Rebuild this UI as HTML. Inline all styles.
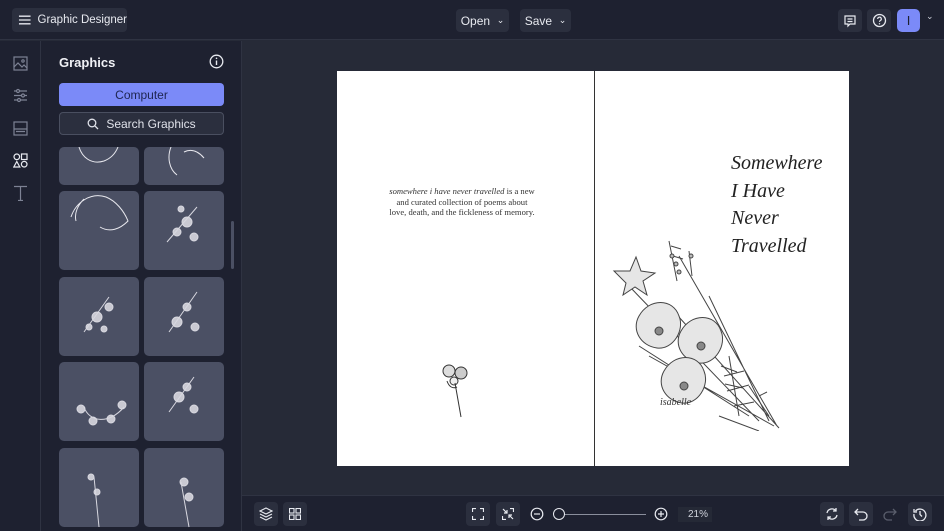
<!DOCTYPE html>
<html><head><meta charset="utf-8"><style>
*{box-sizing:border-box;margin:0;padding:0}
body{width:944px;height:531px;overflow:hidden;background:#262a37;font-family:"Liberation Sans",sans-serif;color:#e6e8ef;position:relative}
.top{position:absolute;left:0;top:0;width:944px;height:40px;background:#1e2130;border-bottom:1px solid #2f3342}
.btn{position:absolute;background:#2b2f3e;border-radius:4px;font-size:12px;color:#e8eaf0;display:flex;align-items:center;justify-content:center;white-space:nowrap}
.rail{position:absolute;left:0;top:41px;width:41px;height:490px;background:#1e2130;border-right:1px solid #2f3342}
.panel{position:absolute;left:41px;top:41px;width:201px;height:490px;background:#1e2130;border-right:1px solid #2f3342;overflow:hidden}
.tile{position:absolute;width:80px;height:79px;background:#4b5064;border-radius:5px}
.page{position:absolute;left:337px;top:71px;width:512px;height:395px;background:#fff}
.bot{position:absolute;left:242px;top:495px;width:702px;height:36px;background:#1e2130;border-top:1px solid #2f3342}
.ib{position:absolute;width:24px;height:24px;background:#2b2f3e;border-radius:4px;top:6px}
svg{position:absolute}
</style></head><body>
<div class="top">
 <div class="btn" style="left:12px;top:8px;width:115px;height:24px;justify-content:flex-start;padding-left:6px;font-size:11.5px">
  <svg style="position:static" width="14" height="12" viewBox="0 0 14 12"><path d="M1 2h12M1 6h12M1 10h12" stroke="#e8eaf0" stroke-width="1.4"/></svg>
  <span style="margin-left:6px">Graphic Designer</span></div>
 <div class="btn" style="left:456px;top:9px;width:53px;height:23px">Open&nbsp;&nbsp;<span style="font-size:9px">⌄</span></div>
 <div class="btn" style="left:520px;top:9px;width:51px;height:23px">Save&nbsp;&nbsp;<span style="font-size:9px">⌄</span></div>
 <div class="btn" style="left:838px;top:9px;width:24px;height:23px"><svg style="position:static" width="14" height="14" viewBox="0 0 14 14"><path d="M2 2h10v8H7l-2 2v-2H2z M4.5 5h5M4.5 7.5h5" fill="none" stroke="#e8eaf0" stroke-width="1.2"/></svg></div>
 <div class="btn" style="left:867px;top:9px;width:24px;height:23px"><svg style="position:static" width="15" height="15" viewBox="0 0 15 15"><circle cx="7.5" cy="7.5" r="6" fill="none" stroke="#e8eaf0" stroke-width="1.3"/><path d="M5.7 6a1.8 1.8 0 1 1 2.5 1.6c-.6.3-.7.7-.7 1.3" fill="none" stroke="#e8eaf0" stroke-width="1.2"/><circle cx="7.5" cy="10.8" r=".7" fill="#e8eaf0"/></svg></div>
 <div class="btn" style="left:897px;top:9px;width:23px;height:23px;background:#7b8af8;border-radius:5px;color:#1e2130;font-size:13px">I</div>
 <div style="position:absolute;left:926px;top:11px;font-size:9px;color:#cfd2dc">⌄</div>
</div>
<div class="rail">
 <svg style="left:13px;top:15px" width="15" height="15" viewBox="0 0 15 15" fill="none" stroke="#7d8294" stroke-width="1.2"><rect x="1" y="1" width="13" height="13"/><path d="M1 11l4-4 4 4 2-2 3 3"/><circle cx="10" cy="5" r="1.2"/></svg>
 <svg style="left:13px;top:47px" width="15" height="15" viewBox="0 0 15 15" fill="none" stroke="#7d8294" stroke-width="1.2"><path d="M1 3h13M1 7.5h13M1 12h13"/><circle cx="5" cy="3" r="1.5" fill="#1e2130"/><circle cx="10" cy="7.5" r="1.5" fill="#1e2130"/><circle cx="6" cy="12" r="1.5" fill="#1e2130"/></svg>
 <svg style="left:13px;top:80px" width="15" height="15" viewBox="0 0 15 15" fill="none" stroke="#7d8294" stroke-width="1.2"><rect x="1" y="1" width="13" height="13"/><path d="M1 8h13M3 10.5h9"/></svg>
 <svg style="left:13px;top:112px" width="15" height="15" viewBox="0 0 15 15" fill="none" stroke="#e8eaf0" stroke-width="1.2"><circle cx="3.8" cy="3.8" r="2.8"/><rect x="8.5" y="1" width="5.5" height="5.5"/><path d="M3.8 8.5l3 5.5h-6z"/><circle cx="11.2" cy="11.2" r="2.8"/></svg>
 <svg style="left:13px;top:144px" width="15" height="16" viewBox="0 0 15 16" fill="none" stroke="#7d8294" stroke-width="1.2"><path d="M1 1.5h13M7.5 1.5v14M5 15.5h5"/></svg>
</div>
<div class="panel">
 <div style="position:absolute;left:18px;top:14px;font-size:13px;font-weight:bold;color:#f0f1f5">Graphics</div>
 <svg style="left:168px;top:13px" width="15" height="15" viewBox="0 0 15 15"><circle cx="7.5" cy="7.5" r="6.3" fill="none" stroke="#e8eaf0" stroke-width="1.3"/><path d="M7.5 6.5v4.5" stroke="#e8eaf0" stroke-width="1.4"/><circle cx="7.5" cy="4.3" r=".8" fill="#e8eaf0"/></svg>
 <div style="position:absolute;left:18px;top:42px;width:165px;height:23px;background:#7b8af8;border-radius:4px;color:#1e2550;font-size:12px;display:flex;align-items:center;justify-content:center">Computer</div>
 <div style="position:absolute;left:18px;top:71px;width:165px;height:23px;background:#2b2f3e;border:1px solid #4a4f60;border-radius:4px;color:#e0e2ea;font-size:12px;display:flex;align-items:center;justify-content:center"><svg style="position:static;margin-right:7px" width="12" height="12" viewBox="0 0 12 12" fill="none" stroke="#e0e2ea" stroke-width="1.3"><circle cx="5" cy="5" r="3.8"/><path d="M8 8l3 3"/></svg>Search Graphics</div>
 <div class="tile" style="left:18px;top:106px;height:38px"></div>
 <div class="tile" style="left:103px;top:106px;height:38px"></div>
 <div class="tile" style="left:18px;top:150px"></div><div class="tile" style="left:103px;top:150px"></div>
 <div class="tile" style="left:18px;top:236px"></div><div class="tile" style="left:103px;top:236px"></div>
 <div class="tile" style="left:18px;top:321px"></div><div class="tile" style="left:103px;top:321px"></div>
 <div class="tile" style="left:18px;top:407px"></div><div class="tile" style="left:103px;top:407px"></div>
 <svg style="left:18px;top:106px" width="170" height="384" fill="none" stroke="#e8e8ee" stroke-width="1">
  <path d="M20 0c3 10 12 18 25 14 8-3 12-9 14-14M112 0c-4 10-2 22 6 28M125 5c8-4 15 0 20 6"/>
  <path d="M12 70c5-15 20-25 35-20 10 4 18 14 22 24-8 8-18 12-28 6M25 52c-6 6-10 14-8 22"/>
  <g fill="#c9c9d2" stroke="#d8d8e0" stroke-width="1">
   <circle cx="118" cy="85" r="4"/><circle cx="128" cy="75" r="5"/><circle cx="135" cy="90" r="4"/><circle cx="122" cy="62" r="3"/>
   <circle cx="38" cy="170" r="5"/><circle cx="50" cy="160" r="4"/><circle cx="30" cy="180" r="3"/><circle cx="45" cy="182" r="3"/>
   <circle cx="118" cy="175" r="5"/><circle cx="128" cy="160" r="4"/><circle cx="136" cy="180" r="4"/>
   <circle cx="22" cy="262" r="4"/><circle cx="34" cy="274" r="4"/><circle cx="52" cy="272" r="4"/><circle cx="63" cy="258" r="4"/>
   <circle cx="120" cy="250" r="5"/><circle cx="135" cy="262" r="4"/><circle cx="128" cy="240" r="4"/>
   <circle cx="32" cy="330" r="3"/><circle cx="38" cy="345" r="3"/><circle cx="125" cy="335" r="4"/><circle cx="130" cy="350" r="4"/>
  </g>
  <g stroke="#d8d8e0" stroke-width="1"><path d="M108 95l30-35M25 185l25-35M110 185l28-40M25 260c5 15 25 18 40 0M110 265l25-35M40 380l-5-50M130 380l-8-45"/></g>
 </svg>
 <div style="position:absolute;left:190px;top:180px;width:3px;height:48px;background:#4b5064;border-radius:2px"></div>
</div>
<div class="page">
 <div style="position:absolute;left:257px;top:0;width:1px;height:395px;background:#333"></div>
 <div style="position:absolute;left:50px;top:115px;width:150px;text-align:center;font-family:'Liberation Serif',serif;font-size:8.6px;line-height:10.5px;color:#333"><i>somewhere i have never travelled</i> is a new and curated collection of poems about love, death, and the fickleness of memory.</div>
 <svg style="left:100px;top:288px" width="40" height="62" fill="none" stroke="#333" stroke-width="1"><circle cx="12" cy="12" r="6" fill="#ddd"/><circle cx="24" cy="14" r="6" fill="#ccc"/><circle cx="17" cy="22" r="4" fill="#eee"/><path d="M18 24l6 34M10 22c2 6 6 8 10 6"/></svg>
 <div style="position:absolute;left:394px;top:79px;font-family:'Liberation Serif',serif;font-style:italic;font-size:20px;line-height:27.5px;color:#222">Somewhere<br>I Have<br>Never<br>Travelled</div>
 <svg style="left:272px;top:165px" width="175" height="195" stroke="#444" stroke-width="1">
  <g fill="none"><path d="M170 192L60 70M165 190L40 120M160 185L100 60M150 185L20 50M168 190L70 20M140 180L30 110"/></g>
  <g fill="#e6e6e6"><path d="M5 35l16 0 6-14 5 14 14 2-12 8 4 14-12-8-12 8 3-12z"/>
  <path d="M30 80c10-18 34-18 40 0 6 14-6 34-22 32-16-2-26-18-18-32z"/>
  <path d="M72 95c10-18 34-18 40 0 6 14-6 34-22 32-16-2-26-18-18-32z"/>
  <path d="M55 135c10-18 34-18 40 0 6 14-6 34-22 32-16-2-26-18-18-32z"/></g>
  <g fill="#888"><circle cx="50" cy="95" r="4"/><circle cx="92" cy="110" r="4"/><circle cx="75" cy="150" r="4"/></g>
  <g fill="none"><path d="M120 120l10 60M115 140l20-5M118 155l22-6M125 170l20-4M110 180l40 15M112 130l16 6M116 148l18 4"/>
  <path d="M60 5l8 40M80 15l3 25M62 10l10 3M64 20l10 3M140 150l20 30M150 160l8-4"/></g>
  <g fill="#bbb"><circle cx="63" cy="20" r="2"/><circle cx="67" cy="28" r="2"/><circle cx="70" cy="36" r="2"/><circle cx="82" cy="20" r="2"/></g>
 </svg>
 <div style="position:absolute;left:323px;top:326px;font-family:'Liberation Serif',serif;font-style:italic;font-size:10px;color:#333">isabelle</div>
</div>
<div class="bot">
 <div class="ib" style="left:12px"><svg style="left:5px;top:5px" width="14" height="14" viewBox="0 0 14 14" fill="none" stroke="#e8eaf0" stroke-width="1.1"><path d="M7 1l6 3-6 3-6-3z M1 7l6 3 6-3 M1 10l6 3 6-3"/></svg></div>
 <div class="ib" style="left:41px"><svg style="left:6px;top:6px" width="12" height="12" viewBox="0 0 12 12" fill="none" stroke="#e8eaf0" stroke-width="1.1"><rect x=".5" y=".5" width="4.5" height="4.5"/><rect x="7" y=".5" width="4.5" height="4.5"/><rect x=".5" y="7" width="4.5" height="4.5"/><rect x="7" y="7" width="4.5" height="4.5"/></svg></div>
 <div class="ib" style="left:224px"><svg style="left:6px;top:6px" width="12" height="12" viewBox="0 0 12 12" fill="none" stroke="#e8eaf0" stroke-width="1.2"><path d="M.5 4V.5H4M8 .5h3.5V4M11.5 8v3.5H8M4 11.5H.5V8"/></svg></div>
 <div class="ib" style="left:254px"><svg style="left:6px;top:6px" width="12" height="12" viewBox="0 0 12 12" fill="none" stroke="#e8eaf0" stroke-width="1.2"><path d="M1 1l4 4M5 2v3H2M11 11L7 7M7 10V7h3M8 .5h3.5V4M4 11.5H.5V8"/></svg></div>
 <svg style="left:288px;top:11px" width="14" height="14" viewBox="0 0 14 14" fill="none" stroke="#e8eaf0" stroke-width="1.2"><circle cx="7" cy="7" r="5.8"/><path d="M4 7h6"/></svg>
 <div style="position:absolute;left:316px;top:18px;width:88px;height:1px;background:#8a8e9c"></div>
 <div style="position:absolute;left:311px;top:12px;width:12px;height:12px;border-radius:50%;border:1.5px solid #e8eaf0;background:#1e2130"></div>
 <svg style="left:412px;top:11px" width="14" height="14" viewBox="0 0 14 14" fill="none" stroke="#e8eaf0" stroke-width="1.2"><circle cx="7" cy="7" r="5.8"/><path d="M4 7h6M7 4v6"/></svg>
 <div style="position:absolute;left:436px;top:11px;width:34px;height:15px;background:#252936;font-size:10px;color:#d0d3dc;text-align:right;padding-right:4px;line-height:15px">21%</div>
 <div class="ib" style="left:578px"><svg style="left:5px;top:5px" width="14" height="14" viewBox="0 0 14 14" fill="none" stroke="#e8eaf0" stroke-width="1.3"><path d="M2 6a5 5 0 0 1 9-2M12 8a5 5 0 0 1-9 2M11 1v3H8M3 13v-3h3"/></svg></div>
 <div class="ib" style="left:607px"><svg style="left:5px;top:5px" width="14" height="14" viewBox="0 0 14 14" fill="none" stroke="#e8eaf0" stroke-width="1.3"><path d="M4 2L1 5l3 3M1 5h8a4 4 0 0 1 0 8H5"/></svg></div>
 <div class="ib" style="left:636px;background:#1e2130"><svg style="left:5px;top:5px" width="14" height="14" viewBox="0 0 14 14" fill="none" stroke="#5a5e6c" stroke-width="1.3"><path d="M10 2l3 3-3 3M13 5H5a4 4 0 0 0 0 8h4"/></svg></div>
 <div class="ib" style="left:666px"><svg style="left:5px;top:5px" width="14" height="14" viewBox="0 0 14 14" fill="none" stroke="#e8eaf0" stroke-width="1.3"><path d="M2.5 4A6 6 0 1 1 1 7M1 2v3h3M7 4v3.5l2 2"/></svg></div>
</div>
</body></html>
